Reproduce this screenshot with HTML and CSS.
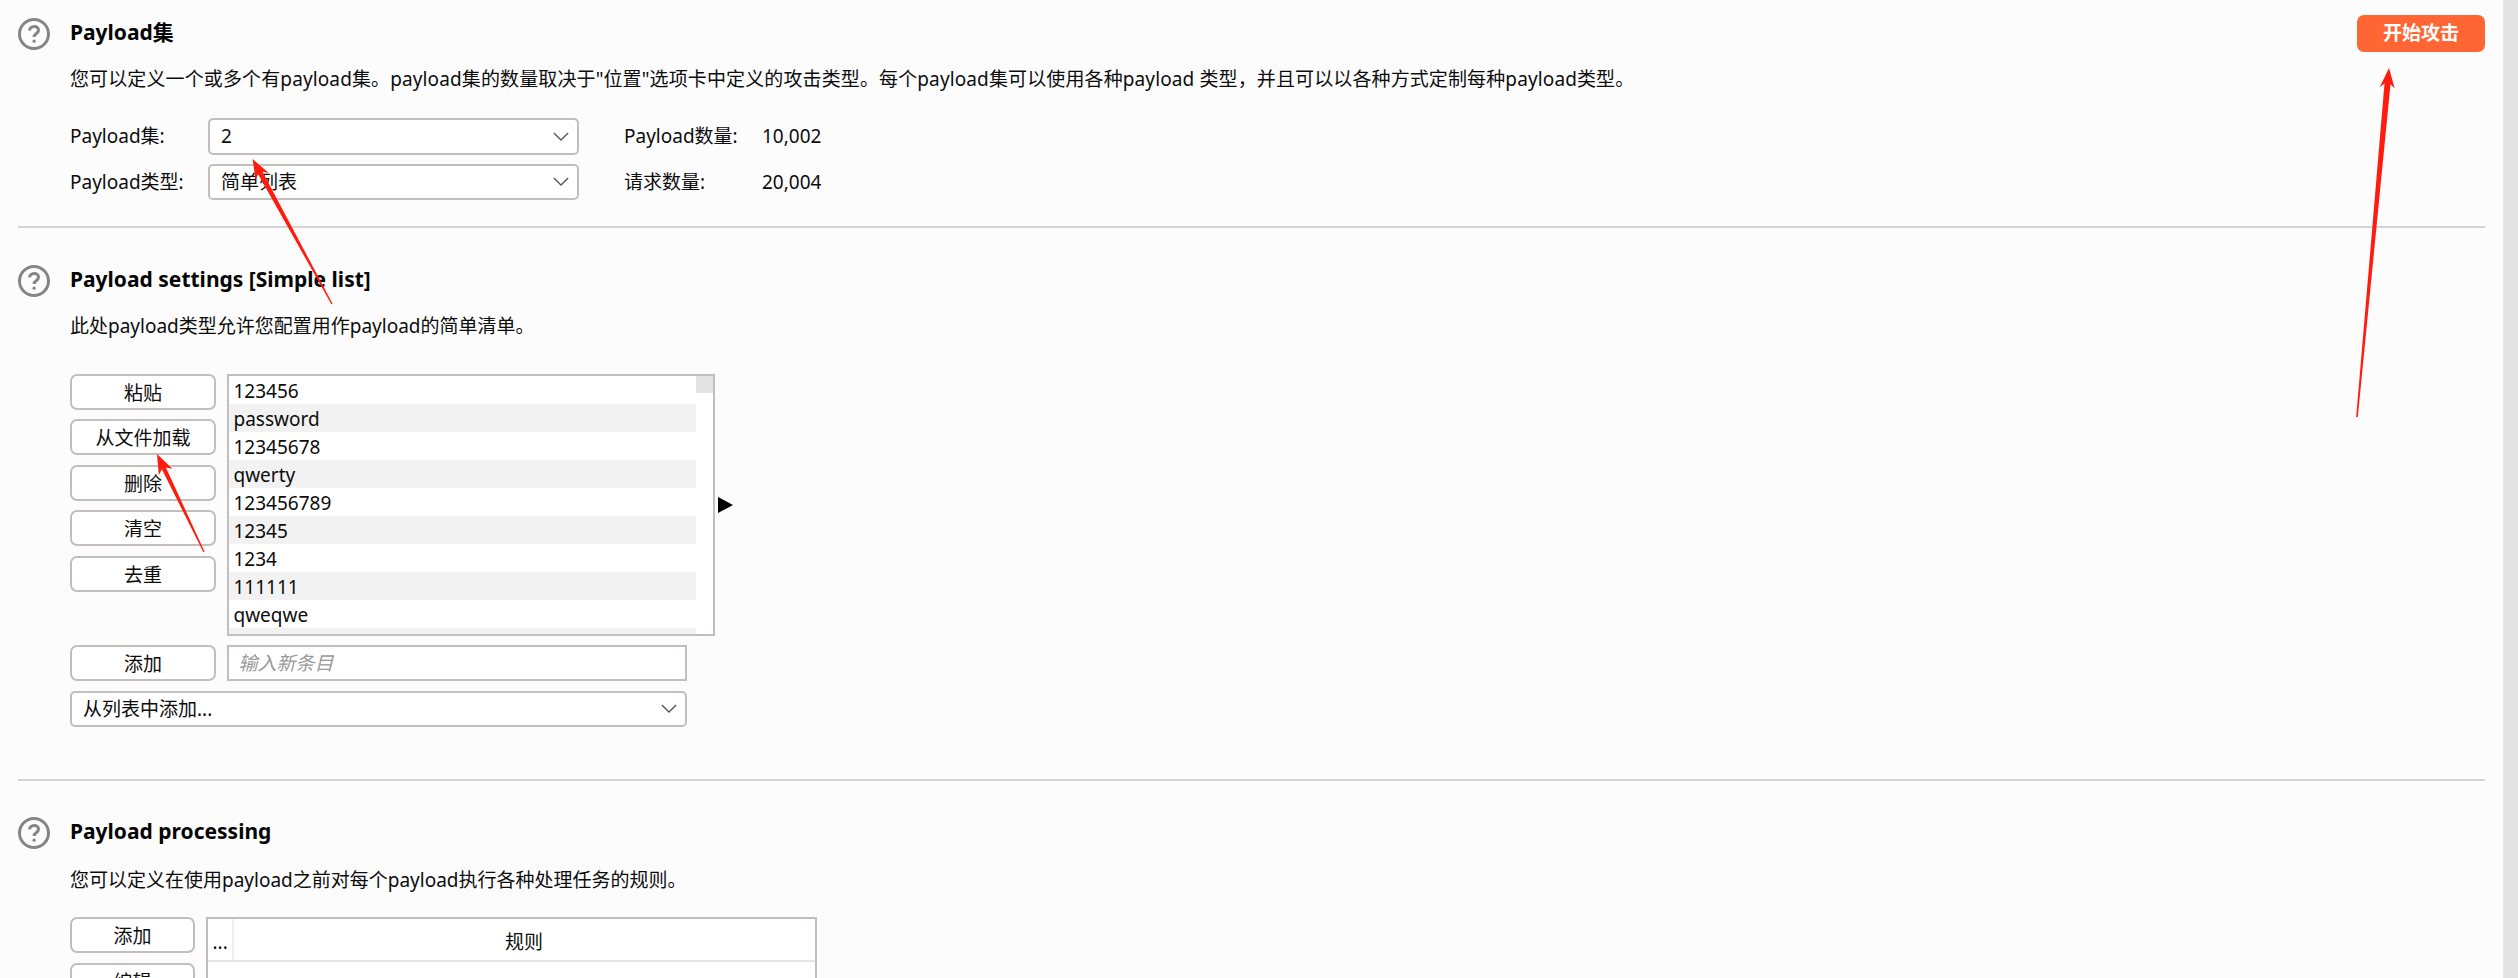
FILE: index.html
```html
<!DOCTYPE html>
<html lang="zh">
<head>
<meta charset="utf-8">
<title>Payload</title>
<link rel="stylesheet" href="styles.css">
</head>
<body>
<div class="page">
  <main class="main">
    <section class="section first">
      <header class="head">
        <svg class="help" viewBox="0 0 32 32"><circle cx="16" cy="16" r="14.5"/><path d="M11.6 12.6c0-2.6 2-4.2 4.5-4.2s4.4 1.5 4.4 3.800c0 3.200-4.400 3.400-4.400 6.800"/><circle class="dot" cx="16.100" cy="23.200" r="1.600"/></svg>
        <h2 class="title">Payload集</h2>
        <button class="start">开始攻击</button>
      </header>
      <p class="desc">您可以定义一个或多个有payload集。payload集的数量取决于"位置"选项卡中定义的攻击类型。每个payload集可以使用各种payload 类型，并且可以以各种方式定制每种payload类型。</p>
      <div class="form">
        <span class="label">Payload集:</span>
        <div class="select"><span>2</span><svg class="chev" viewBox="0 0 18 10"><path d="M1 1l8 8 8-8"/></svg></div>
        <span class="label stat">Payload数量:</span>
        <span class="label">10,002</span>
        <span class="label">Payload类型:</span>
        <div class="select"><span>简单列表</span><svg class="chev" viewBox="0 0 18 10"><path d="M1 1l8 8 8-8"/></svg></div>
        <span class="label stat">请求数量:</span>
        <span class="label">20,004</span>
      </div>
    </section>

    <section class="section second">
      <header class="head">
        <svg class="help" viewBox="0 0 32 32"><circle cx="16" cy="16" r="14.5"/><path d="M11.6 12.6c0-2.6 2-4.2 4.5-4.2s4.4 1.5 4.4 3.800c0 3.200-4.400 3.400-4.400 6.800"/><circle class="dot" cx="16.100" cy="23.200" r="1.600"/></svg>
        <h2 class="title">Payload settings [Simple list]</h2>
      </header>
      <p class="desc">此处payload类型允许您配置用作payload的简单清单。</p>
      <div class="editor">
        <div class="buttons">
          <button class="btn">粘贴</button>
          <button class="btn">从文件加载</button>
          <button class="btn">删除</button>
          <button class="btn">清空</button>
          <button class="btn">去重</button>
        </div>
        <div class="list">
          <ul class="rows">
            <li>123456</li>
            <li>password</li>
            <li>12345678</li>
            <li>qwerty</li>
            <li>123456789</li>
            <li>12345</li>
            <li>1234</li>
            <li>111111</li>
            <li>qweqwe</li>
            <li></li>
          </ul>
          <div class="track"><div class="thumb"></div></div>
        </div>
        <div class="expand"></div>
      </div>
      <div class="add-row">
        <button class="btn">添加</button>
        <div class="input">输入新条目</div>
      </div>
      <div class="select wide"><span>从列表中添加...</span><svg class="chev" viewBox="0 0 18 10"><path d="M1 1l8 8 8-8"/></svg></div>
    </section>

    <section class="section third">
      <header class="head">
        <svg class="help" viewBox="0 0 32 32"><circle cx="16" cy="16" r="14.5"/><path d="M11.6 12.6c0-2.6 2-4.2 4.5-4.2s4.4 1.5 4.4 3.800c0 3.200-4.400 3.400-4.400 6.800"/><circle class="dot" cx="16.100" cy="23.200" r="1.600"/></svg>
        <h2 class="title">Payload processing</h2>
      </header>
      <p class="desc">您可以定义在使用payload之前对每个payload执行各种处理任务的规则。</p>
      <div class="rules">
        <div class="buttons narrow">
          <button class="btn">添加</button>
          <button class="btn">编辑</button>
        </div>
        <div class="table">
          <div class="thead"><span class="col-a">...</span><span class="col-b">规则</span></div>
        </div>
      </div>
    </section>
  </main>
  <div class="gutter"></div>
  <svg class="marks" viewBox="0 0 2518 978">
    <polygon points="252.600,159 268.800,172.900 262.500,171.800 332.600,303.700 331.400,304.300 258.100,174.200 255.600,180.100"/>
    <polygon points="157,454 172.400,468.800 165.900,467.500 204.600,551.700 203.400,552.300 161.900,469.300 158.800,475.200"/>
    <polygon points="2389,68 2394.700,88.600 2390.500,84.200 2357.800,417.100 2356.200,416.900 2384.500,83.600 2379.700,87.200"/>
  </svg>
</div>
</body>
</html>
```
FILE: styles.css
```css
* { box-sizing: border-box; }
html, body { margin: 0; height: 978px; overflow: hidden; }
body {
  background: #fcfcfc;
  color: #0c0c0c;
  font: 19px/24px "Noto Sans", "Noto Sans CJK SC", sans-serif;
}
.page { position: relative; display: flex; width: 2518px; height: 978px; overflow: hidden; }
.main { width: 2503px; padding: 0 18px; flex: none; }
.gutter { flex: 1; background: #e4e4e4; }
.marks { position: absolute; left: 0; top: 0; width: 2518px; height: 978px; pointer-events: none; }
.marks polygon { fill: #ff1c0e; }

.section.first { padding-top: 18px; height: 228px; border-bottom: 2px solid #d4d4d4; }
.section.second { padding-top: 37px; height: 553px; border-bottom: 2px solid #d4d4d4; }
.section.third { padding-top: 36px; }

.head { display: flex; align-items: center; height: 32px; gap: 20px; }
.help { width: 32px; height: 32px; flex: none; }
.help circle, .help path { fill: none; stroke: #858585; stroke-width: 3; }
.help .dot { fill: #858585; stroke: none; }
.title { margin: 0 0 3px; font-size: 21px; line-height: 29px; font-weight: 700; color: #050505; }
.start {
  margin: -2px 0 0 auto;
  width: 128px; height: 37px; padding: 0;
  border: 0; border-radius: 7px;
  background: #ff6633; color: #fff;
  font: 700 19px/37px "Noto Sans", "Noto Sans CJK SC", sans-serif;
}
.desc { margin: 18px 0 0 52px; white-space: nowrap; }
.first .desc { margin-top: 17px; letter-spacing: .12px; }
.second .desc { margin-top: 17px; }
.third .desc { margin-top: 19px; }

.form {
  display: grid;
  grid-template-columns: 138px 371px 183px auto;
  grid-auto-rows: 36.5px;
  row-gap: 9px;
  align-items: center;
  justify-content: start;
  margin: 27px 0 0 52px;
}
.label { white-space: nowrap; }
.stat { padding-left: 45px; }

.select {
  display: flex; align-items: center; justify-content: space-between;
  height: 36.5px;
  padding: 0 8px 0 11px;
  background: #fff;
  border: 2px solid #c2bebe;
  border-radius: 5px;
}
.chev { width: 16px; height: 9px; flex: none; }
.chev path { fill: none; stroke: #555; stroke-width: 1.5; }
.select.wide { width: 617px; height: 36px; margin: 10px 0 0 52px; }

.btn {
  display: block;
  width: 146px; height: 36px; padding: 2px 0 0;
  background: #fff; color: #0c0c0c;
  border: 2px solid #c2bebe; border-radius: 7px;
  font: 19px/30px "Noto Sans", "Noto Sans CJK SC", sans-serif;
}
.buttons { display: flex; flex-direction: column; gap: 9.5px; flex: none; }
.editor { display: flex; gap: 10.5px; margin: 35.5px 0 0 52px; }
.list {
  display: flex; width: 488.5px; height: 262px;
  background: #fff;
  border: 2px solid #c2bebe;
  overflow: hidden;
}
.rows { flex: 1; margin: 0; padding: 0; list-style: none; }
.rows li { height: 28px; line-height: 30px; padding-left: 5px; }
.rows li:nth-child(even) { background: #f2f2f2; }
.track { width: 17px; flex: none; }
.thumb { height: 17px; background: #e4e4e4; }
.expand {
  align-self: center;
  width: 0; height: 0;
  margin: 0 0 0 -7.5px;
  border-left: 15px solid #000;
  border-top: 8px solid transparent;
  border-bottom: 8px solid transparent;
}

.add-row { display: flex; gap: 10.5px; margin: 9px 0 0 52px; }
.input {
  width: 460.5px; height: 36px;
  padding-left: 10px;
  background: #fff;
  border: 2px solid #c2bebe;
  color: #999;
  font-style: italic;
  line-height: 32px;
}

.rules { display: flex; gap: 10.5px; margin: 25px 0 0 52px; }
.narrow .btn { width: 125px; }
.table {
  width: 611px; height: 300px;
  background: #fff;
  border: 2px solid #c2bebe;
}
.thead { display: flex; height: 43px; border-bottom: 2px solid #e6e6e6; line-height: 46px; }
.col-a { width: 26px; padding-left: 5px; border-right: 2px solid #eee; }
.col-b { flex: 1; text-align: center; }
```
